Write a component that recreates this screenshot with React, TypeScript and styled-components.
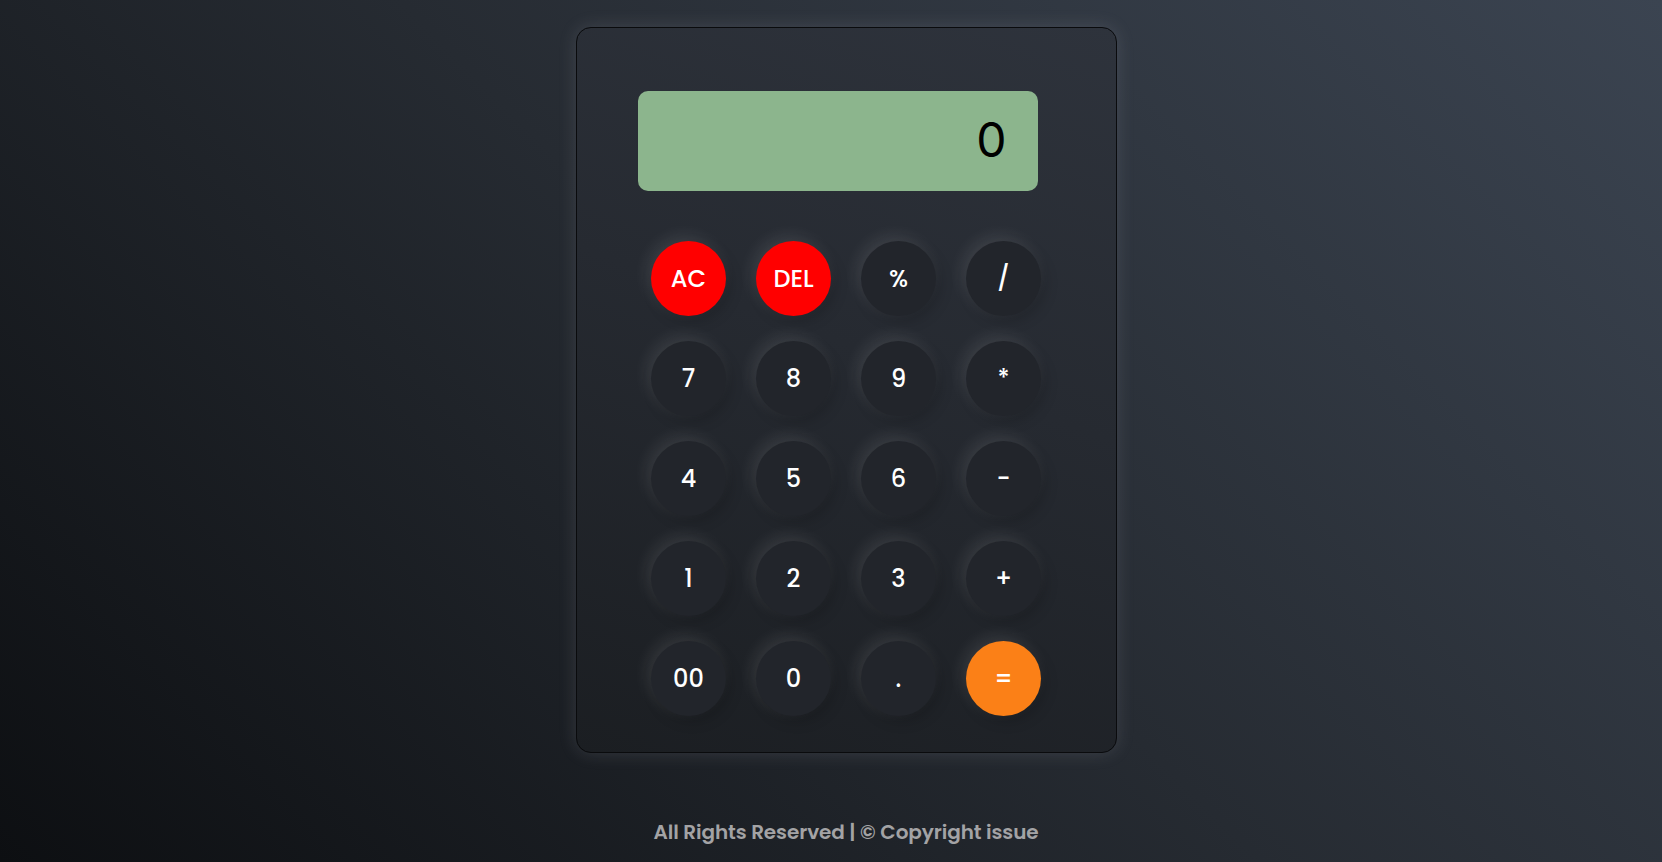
import React from "react";
import styled, { createGlobalStyle } from "styled-components";

const GlobalStyle = createGlobalStyle`
  html, body {
    margin: 0;
    padding: 0;
  }
  body {
    min-height: 100vh;
    background: linear-gradient(45deg, #0d0f12 0%, #262b32 50%, #3b4451 100%);
    font-family: Poppins, Inter, "Noto Sans", sans-serif;
  }
`;

const Page = styled.main`
  min-height: 862px;
  box-sizing: border-box;
  display: flex;
  flex-direction: column;
  align-items: center;
  padding: 27px 0 0 30px;
`;

const Card = styled.div`
  width: 541px;
  height: 726px;
  box-sizing: border-box;
  border: 1px solid #0a0b0d;
  border-radius: 15px;
  background: linear-gradient(200deg, #2e333c 0%, #262a31 45%, #1b1e22 100%);
  box-shadow: 0 0 18px rgba(190, 195, 205, 0.16);
  display: flex;
  flex-direction: column;
  padding-top: 63px;
`;

const Display = styled.div`
  width: 400px;
  height: 100px;
  margin-left: 61px;
  box-sizing: border-box;
  border-radius: 10px;
  background: #8cb58d;
  color: #000;
  display: flex;
  align-items: center;
  justify-content: flex-end;
  padding: 0 31px 4px 0;
  font-family: Inter, "DejaVu Sans", sans-serif;
  font-size: 48px;
  font-weight: 400;
`;

const Keys = styled.div`
  margin-top: 50px;
  display: grid;
  grid-template-columns: repeat(4, 75px);
  column-gap: 30px;
  row-gap: 25px;
  justify-content: center;
`;

type Tone = "plain" | "red" | "orange";

const toneBg: Record<Tone, string> = {
  plain: "#22252b",
  red: "#ff0000",
  orange: "#fb8017",
};

const Key = styled.button<{ $tone: Tone }>`
  width: 75px;
  height: 75px;
  border: none;
  border-radius: 50%;
  padding: 0;
  background: ${(p) => toneBg[p.$tone]};
  color: #ffffff;
  font-family: Poppins, Inter, "Noto Sans", sans-serif;
  font-size: 24px;
  font-weight: 500;
  display: flex;
  align-items: center;
  justify-content: center;
  box-shadow: -4px -5px 16px rgba(255, 255, 255, 0.1),
    4px 5px 14px rgba(0, 0, 0, 0.18);
  cursor: pointer;
`;

const Footer = styled.footer`
  margin-top: 64px;
  line-height: 30px;
  font-family: Poppins, Inter, "Noto Sans", sans-serif;
  font-size: 20px;
  font-weight: 600;
  letter-spacing: -0.1px;
  color: #a3a3a5;
`;

const keys: { label: string; tone: Tone }[] = [
  { label: "AC", tone: "red" },
  { label: "DEL", tone: "red" },
  { label: "%", tone: "plain" },
  { label: "/", tone: "plain" },
  { label: "7", tone: "plain" },
  { label: "8", tone: "plain" },
  { label: "9", tone: "plain" },
  { label: "*", tone: "plain" },
  { label: "4", tone: "plain" },
  { label: "5", tone: "plain" },
  { label: "6", tone: "plain" },
  { label: "-", tone: "plain" },
  { label: "1", tone: "plain" },
  { label: "2", tone: "plain" },
  { label: "3", tone: "plain" },
  { label: "+", tone: "plain" },
  { label: "00", tone: "plain" },
  { label: "0", tone: "plain" },
  { label: ".", tone: "plain" },
  { label: "=", tone: "orange" },
];

export default function App() {
  return (
    <>
      <GlobalStyle />
      <Page>
        <Card>
          <Display>0</Display>
          <Keys>
            {keys.map((k) => (
              <Key key={k.label} $tone={k.tone}>
                {k.label}
              </Key>
            ))}
          </Keys>
        </Card>
        <Footer>All Rights Reserved | © Copyright issue</Footer>
      </Page>
    </>
  );
}
